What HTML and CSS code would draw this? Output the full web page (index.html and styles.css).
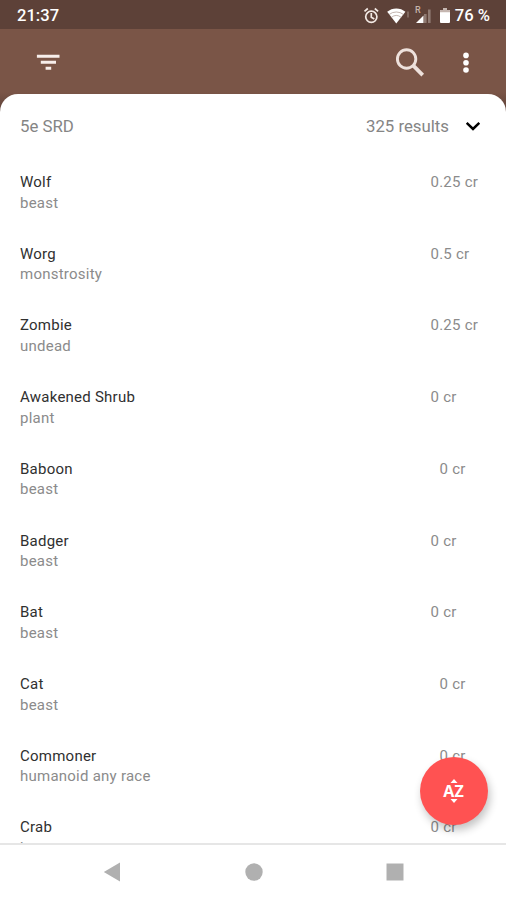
FILE: index.html
```html
<!DOCTYPE html>
<html lang="en">
<head>
<meta charset="utf-8">
<title>Monsters</title>
<link rel="stylesheet" href="styles.css">
</head>
<body>
<div class="phone">
  <header class="status">
    <span class="time">21:37</span>
    <svg class="status-icons" width="82" height="22" viewBox="0 0 82 22" fill="none" aria-hidden="true">
      <g stroke="#f3e9e4" stroke-width="1.7">
        <circle cx="8.3" cy="11.8" r="5.6"/>
        <path d="M8.3 8v4.3l3 1.7M1.5 6.3l3.3-2.8M15.1 6.3l-3.3-2.8"/>
      </g>
      <path d="M24.2 6.8a14 14 0 0 1 18.2 0L33.3 18.5z" fill="#fff"/>
      <path d="M26 9.6a11.5 11.5 0 0 1 14.6 0M28.3 12.4a8 8 0 0 1 10 0" stroke="#a9958d" stroke-width=".7"/>
      <path d="M45 6.5v6" stroke="#846d64" stroke-width="1.8"/>
      <path d="M53 18l7.5-7.5V18z" fill="#fff"/>
      <path d="M62.3 9v9M66.3 4.5V18" stroke="#907b73" stroke-width="2.6"/>
    </svg>
    <span class="roaming">R</span>
    <svg class="battery" width="10" height="15" viewBox="0 0 10 16" preserveAspectRatio="none" aria-hidden="true">
      <path d="M3 0h4v2h2q1 0 1 1v12q0 1-1 1H1q-1 0-1-1V3q0-1 1-1h2z" fill="#fff"/>
      <path d="M3 0h4v2h2q1 0 1 1v1.6H0V3q0-1 1-1h2z" fill="#c5b6b0"/>
    </svg>
    <span class="percent">76 %</span>
  </header>
  <nav class="toolbar">
    <svg class="filter" width="24" height="18" viewBox="0 0 24 18" aria-hidden="true">
      <path d="M.9 .8h22.6v3H.9zM4.8 6.8h15.2v3H4.8zM9.6 12.8h5.6v3H9.6z" fill="#f7eeeb"/>
    </svg>
    <svg class="search" width="30" height="30" viewBox="0 0 30 30" fill="none" stroke="#eee1dc" aria-hidden="true">
      <circle cx="11.6" cy="11" r="9.2" stroke-width="2.9"/>
      <path d="M18.3 17.7l9.4 9.4" stroke-width="3.8"/>
    </svg>
    <svg class="more" width="8" height="22" viewBox="0 0 8 22" fill="#fff" aria-hidden="true">
      <circle cx="4" cy="3.4" r="2.8"/><circle cx="4" cy="10.7" r="2.8"/><circle cx="4" cy="18" r="2.8"/>
    </svg>
  </nav>
  <main class="sheet">
    <div class="summary">
      <span class="source">5e SRD</span>
      <span class="count">325 results</span>
      <svg class="chevron" width="16" height="10" viewBox="0 0 16 10" fill="none" stroke="#000" stroke-width="2.5" aria-hidden="true"><path d="M1.7 1.9L8 8l6.3-6.1"/></svg>
    </div>
    <ul class="list">
      <li class="row"><div><div class="name">Wolf</div><div class="type">beast</div></div><span class="cr">0.25 cr</span></li>
      <li class="row"><div><div class="name">Worg</div><div class="type">monstrosity</div></div><span class="cr">0.5 cr</span></li>
      <li class="row"><div><div class="name">Zombie</div><div class="type">undead</div></div><span class="cr">0.25 cr</span></li>
      <li class="row"><div><div class="name">Awakened Shrub</div><div class="type">plant</div></div><span class="cr">0 cr</span></li>
      <li class="row"><div><div class="name">Baboon</div><div class="type">beast</div></div><span class="cr inset">0 cr</span></li>
      <li class="row"><div><div class="name">Badger</div><div class="type">beast</div></div><span class="cr">0 cr</span></li>
      <li class="row"><div><div class="name">Bat</div><div class="type">beast</div></div><span class="cr">0 cr</span></li>
      <li class="row"><div><div class="name">Cat</div><div class="type">beast</div></div><span class="cr inset">0 cr</span></li>
      <li class="row"><div><div class="name">Commoner</div><div class="type">humanoid any race</div></div><span class="cr inset">0 cr</span></li>
      <li class="row"><div><div class="name">Crab</div><div class="type">beast</div></div><span class="cr">0 cr</span></li>
    </ul>
  </main>
  <button class="fab" aria-label="Sort">
    <svg width="10" height="4" viewBox="0 0 10 4" fill="#fff"><path d="M1.5 4L5 0l3.5 4z"/></svg>
    <span class="az">AZ</span>
    <svg width="10" height="4" viewBox="0 0 10 4" fill="#fff"><path d="M1.5 0L5 4l3.5-4z"/></svg>
  </button>
  <footer class="navbar">
    <svg width="18" height="20" viewBox="0 0 18 20" fill="#b0b0b0" aria-hidden="true"><path d="M.8 10L17 .6v18.8z"/></svg>
    <svg width="18" height="18" viewBox="0 0 18 18" fill="#b0b0b0" aria-hidden="true"><circle cx="9" cy="9" r="8.7"/></svg>
    <svg width="18" height="18" viewBox="0 0 18 18" fill="#b0b0b0" aria-hidden="true"><path d="M.5.5h17v17H.5z"/></svg>
  </footer>
</div>
</body>
</html>
```
FILE: styles.css
```css
* { box-sizing: border-box; }
body { margin: 0; font-family: Roboto, "Liberation Sans", sans-serif; }
.phone {
  position: relative;
  display: flex;
  flex-direction: column;
  width: 506px;
  height: 900px;
  overflow: hidden;
  background: linear-gradient(#7a5547 92px, #5d4138 112px);
}
.status {
  position: relative;
  display: flex;
  align-items: center;
  flex: none;
  height: 29px;
  padding: 2px 16px 0 17px;
  background: #5d4138;
  color: #fff;
  font-size: 16.6px;
  font-weight: 500;
}
.time { margin-right: auto; }
.status-icons { flex: none; margin-right: -5px; }
.roaming {
  position: absolute;
  left: 415px;
  top: 5px;
  color: #c5b3ab;
  font-size: 9px;
  line-height: 11px;
}
.battery { margin-right: 5px; }
.percent { white-space: nowrap; }
.toolbar {
  display: flex;
  align-items: center;
  flex: none;
  height: 65px;
  padding: 2px 36px 0 36px;
}
.filter { margin-right: auto; }
.search { margin-right: 37px; }
.sheet {
  flex: 1;
  min-height: 0;
  overflow: hidden;
  border-radius: 18px 18px 0 0;
  background: #fff;
}
.summary {
  display: flex;
  align-items: center;
  height: 63px;
  padding: 0 25px 0 20px;
  color: #858585;
  font-size: 16.8px;
}
.source { margin-right: auto; }
.count { margin-right: 16px; }
.list { margin: 0; padding: 15px 0 0; list-style: none; }
.row {
  display: grid;
  grid-template-columns: 410.5px 1fr;
  height: 71.72px;
  padding-left: 20px;
  font-size: 15px;
  line-height: 20.6px;
  letter-spacing: .24px;
}
.name { color: #303030; }
.type, .cr { color: #8b8b8b; }
.inset { padding-left: 9px; }
.fab {
  position: absolute;
  left: 420px;
  top: 757px;
  display: flex;
  flex-direction: column;
  align-items: center;
  justify-content: center;
  width: 68px;
  height: 68px;
  padding: 0 1px 1px 0;
  border: 0;
  border-radius: 50%;
  background: #ff5252;
  box-shadow: 2px 5px 8px rgba(0, 0, 0, .24);
}
.az {
  color: #fff;
  font: 700 16px/16px "Open Sans", sans-serif;
}
.navbar {
  display: flex;
  align-items: center;
  justify-content: space-between;
  flex: none;
  height: 57px;
  padding: 0 102px 2px 103px;
  border-top: 2px solid #e6e6e6;
  background: #fff;
}
```
